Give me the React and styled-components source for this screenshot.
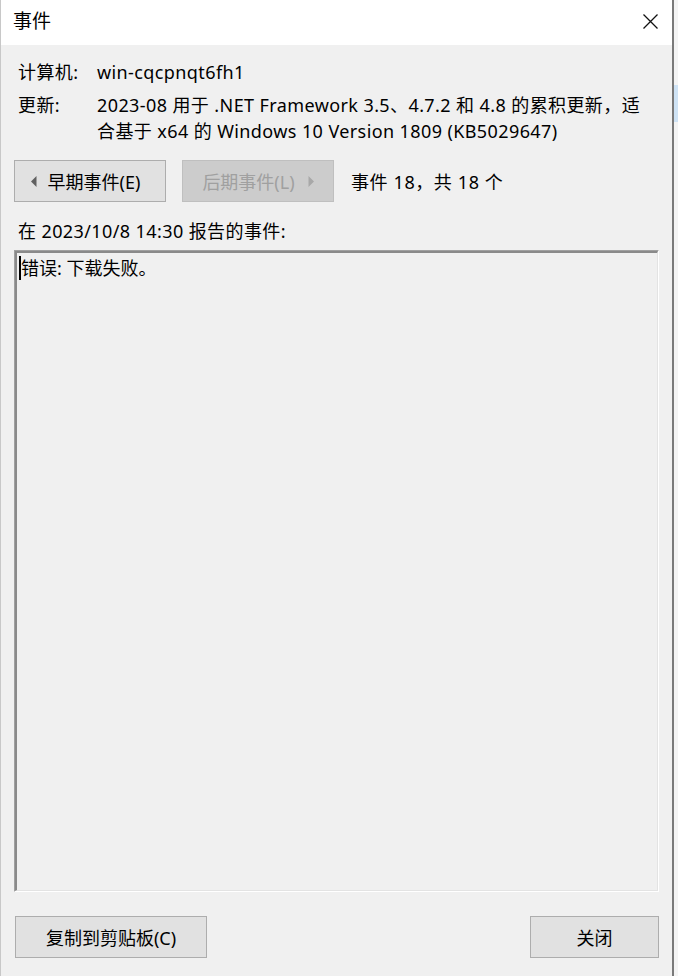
import React from "react";
import styled, { createGlobalStyle } from "styled-components";

const GlobalStyle = createGlobalStyle`
  html, body { margin: 0; padding: 0; background: #e8e8e8; }
  body { font-family: "Noto Sans", "Noto Sans CJK SC", sans-serif; }
  * { box-sizing: border-box; }
`;

const FONT = `"Noto Sans", "Noto Sans CJK SC", sans-serif`;

const Page = styled.div`
  display: flex;
  width: 678px;
  height: 976px;
  background: #f4f4f4;
`;

const Window = styled.div`
  width: 674px;
  height: 976px;
  display: flex;
  flex-direction: column;
  background: #f0f0f0;
  border-left: 1px solid #c8c8c8;
  border-right: 2px solid #7a7a7a;
  font-family: ${FONT};
  font-size: 18px;
  letter-spacing: 0.4px;
  color: #000;
`;

const Desktop = styled.div`
  flex: 1;
  background: linear-gradient(#f4f4f4 0, #f4f4f4 85px, #cfe3f5 85px, #cfe3f5 122px, #f4f4f4 122px);
`;

const TitleBar = styled.div`
  height: 45px;
  flex: none;
  background: #fff;
  display: flex;
  align-items: center;
  justify-content: space-between;
  padding: 0 14px 2px 12px;
`;

const Title = styled.span`
  font-size: 19px;
  letter-spacing: 0;
  line-height: 1;
`;

const CloseIcon = styled.svg`
  width: 15px;
  height: 15px;
  display: block;
`;

const Body = styled.div`
  flex: 1;
  display: flex;
  flex-direction: column;
  padding: 14px 13px 18px 13px;
  min-height: 0;
`;

const InfoGrid = styled.div`
  display: grid;
  grid-template-columns: 79px 1fr;
  row-gap: 7px;
  padding-left: 4px;
  line-height: 26px;
`;

const Label = styled.div``;
const Value = styled.div`
  max-width: 552px;
`;

const NavRow = styled.div`
  display: flex;
  align-items: center;
  gap: 16px;
  margin-top: 16px;
`;

const Button = styled.div`
  height: 42px;
  width: ${(p) => p.$w}px;
  display: flex;
  align-items: center;
  justify-content: center;
  gap: ${(p) => (p.$disabled ? 13 : 11)}px;
  padding-right: ${(p) => p.$shift || 0}px;
  background: ${(p) => (p.$disabled ? "#cccccc" : "#e1e1e1")};
  border: 1px solid ${(p) => (p.$disabled ? "#bfbfbf" : "#adadad")};
  color: ${(p) => (p.$disabled ? "#a0a0a0" : "#000")};
  font-size: 18px;
  letter-spacing: 0;
`;

const Arrow = styled.svg`
  width: 6px;
  height: 11px;
  display: block;
`;

const Counter = styled.span`
  margin-left: 1px;
  letter-spacing: 0.6px;
`;

const ReportLabel = styled.div`
  margin-top: 16px;
  padding-left: 4px;
  line-height: 26px;
`;

const TextBox = styled.div`
  flex: 1;
  margin-top: 6px;
  min-height: 0;
  border-top: 1px solid #a0a0a0;
  border-left: 1px solid #a0a0a0;
  border-right: 1px solid #ffffff;
  border-bottom: 1px solid #ffffff;
`;

const TextInner = styled.div`
  height: 100%;
  border-top: 2px solid #8a8a8a;
  border-left: 2px solid #8a8a8a;
  border-right: 1px solid #e3e3e3;
  border-bottom: 1px solid #e3e3e3;
  background: #f0f0f0;
  padding: 2px 2px;
  display: flex;
  align-items: flex-start;
`;

const Caret = styled.span`
  width: 2px;
  height: 24px;
  background: #000;
  margin-top: 1px;
  flex: none;
`;

const Message = styled.span`
  line-height: 26px;
  letter-spacing: 0;
`;

const Footer = styled.div`
  display: flex;
  justify-content: space-between;
  margin-top: 24px;
  padding-left: 1px;
  padding-right: 0;
`;

export default function App() {
  return (
    <>
      <GlobalStyle />
      <Page>
        <Window>
          <TitleBar>
            <Title>事件</Title>
            <CloseIcon viewBox="0 0 15 15">
              <path d="M0.5 0.5 L14.5 14.5 M14.5 0.5 L0.5 14.5" stroke="#111" strokeWidth="1.3" fill="none" />
            </CloseIcon>
          </TitleBar>
          <Body>
            <InfoGrid>
              <Label>计算机:</Label>
              <Value>win-cqcpnqt6fh1</Value>
              <Label>更新:</Label>
              <Value>
                2023-08 用于 .NET Framework 3.5、4.7.2 和 4.8 的累积更新，适合基于 x64 的 Windows 10 Version 1809 (KB5029647)
              </Value>
            </InfoGrid>
            <NavRow>
              <Button $w={152} $shift={9}>
                <Arrow viewBox="0 0 6 11">
                  <path d="M5.5 0 L0 5.5 L5.5 11 Z" fill="#606060" />
                </Arrow>
                早期事件(E)
              </Button>
              <Button $w={152} $disabled>
                后期事件(L)
                <Arrow viewBox="0 0 6 11">
                  <path d="M0.5 0 L6 5.5 L0.5 11 Z" fill="#a8a8a8" />
                </Arrow>
              </Button>
              <Counter>事件 18，共 18 个</Counter>
            </NavRow>
            <ReportLabel>在 2023/10/8 14:30 报告的事件:</ReportLabel>
            <TextBox>
              <TextInner>
                <Caret />
                <Message>错误: 下载失败。</Message>
              </TextInner>
            </TextBox>
            <Footer>
              <Button $w={192}>复制到剪贴板(C)</Button>
              <Button $w={129}>关闭</Button>
            </Footer>
          </Body>
        </Window>
        <Desktop />
      </Page>
    </>
  );
}
